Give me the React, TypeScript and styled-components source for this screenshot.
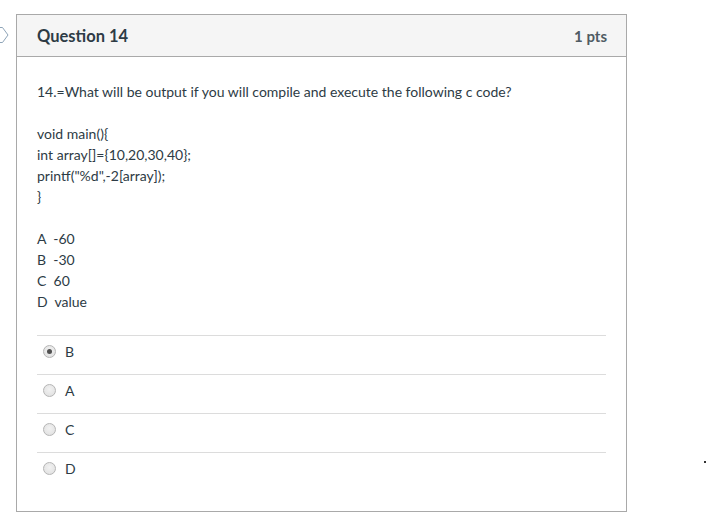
import React from "react";
import styled, { createGlobalStyle } from "styled-components";

const Global = createGlobalStyle`
  html, body { margin: 0; padding: 0; background: #fff; }
  body { font-family: Lato, "Open Sans", "Liberation Sans", sans-serif; color: #2d3b45; }
`;

const Page = styled.div`
  position: relative;
  width: 707px;
  height: 521px;
  padding: 14px 0 0 16px;
  box-sizing: border-box;
  overflow: hidden;
`;

const Flag = styled.svg`
  position: absolute;
  left: 0;
  top: 26px;
`;

const Speck = styled.div`
  position: absolute;
  left: 704px;
  top: 461px;
  width: 2px;
  height: 2px;
  background: #333;
`;

const Card = styled.div`
  width: 611px;
  box-sizing: border-box;
  border: 1px solid #a9a9a9;
`;

const Header = styled.div`
  display: flex;
  align-items: center;
  justify-content: space-between;
  height: 41px;
  padding: 0 19px 0 20px;
  background: #f5f5f5;
  border-bottom: 1px solid #a9a9a9;
`;

const Title = styled.div`
  font-size: 16.5px;
  font-weight: 700;
  color: #2d3b45;
`;

const Points = styled.div`
  font-size: 15px;
  font-weight: 700;
  color: #4f5b63;
`;

const Body = styled.div`
  padding: 24px 20px 20px;
  font-size: 14px;
  line-height: 21px;
`;

const Para = styled.p`
  margin: 0 0 21px;
`;

const Answers = styled.div`
  padding-top: 2px;
`;

const Row = styled.label`
  display: flex;
  align-items: center;
  gap: 9px;
  height: 39px;
  box-sizing: border-box;
  padding: 0 0 8px 6px;
  border-top: 1px solid #dcdcdc;
`;

const Radio = styled.span<{ $checked?: boolean }>`
  position: relative;
  width: 13px;
  height: 13px;
  box-sizing: border-box;
  border-radius: 50%;
  border: 1px solid #b5b5b5;
  background: radial-gradient(circle at 50% 40%, #f2f2f2 0%, #dedede 100%);
  &::after {
    content: "";
    display: ${(p) => (p.$checked ? "block" : "none")};
    position: absolute;
    left: 3px;
    top: 3px;
    width: 5px;
    height: 5px;
    border-radius: 50%;
    background: #505050;
  }
`;

const Letter = styled.span`
  font-size: 14px;
  color: #2d3b45;
`;

const answers = [
  { label: "B", checked: true },
  { label: "A" },
  { label: "C" },
  { label: "D" },
];

export default function App() {
  return (
    <Page>
      <Global />
      <Flag width="10" height="18" viewBox="0 0 10 18">
        <path d="M0 1.5 H2.5 L8 9 L2.5 16.5 H0" fill="none" stroke="#8ea4b8" strokeWidth="1" />
      </Flag>
      <Card>
        <Header>
          <Title>Question 14</Title>
          <Points>1 pts</Points>
        </Header>
        <Body>
          <Para>14.=What will be output if you will compile and execute the following c code?</Para>
          <Para>
            void main(){"{"}
            <br />
            int array[]={"{"}10,20,30,40{"}"};
            <br />
            printf("%d",-2[array]);
            <br />
            {"}"}
          </Para>
          <Para>
            A&nbsp; -60
            <br />
            B&nbsp; -30
            <br />
            C&nbsp; 60
            <br />
            D&nbsp; value
          </Para>
          <Answers>
            {answers.map((a) => (
              <Row key={a.label}>
                <Radio $checked={a.checked} />
                <Letter>{a.label}</Letter>
              </Row>
            ))}
          </Answers>
        </Body>
      </Card>
      <Speck />
    </Page>
  );
}
